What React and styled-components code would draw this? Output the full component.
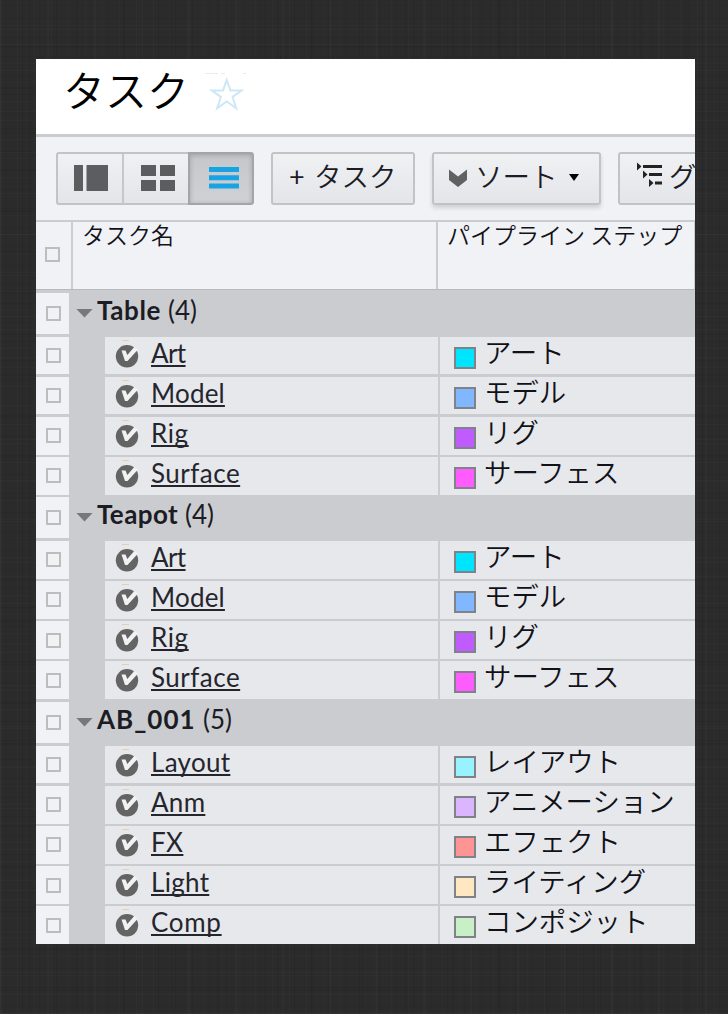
import React from "react";
import styled, { createGlobalStyle, css } from "styled-components";

const Global = createGlobalStyle`
  * { box-sizing: border-box; }
  body {
    margin: 0;
    background-color: #2b2b2b;
    background-image:
      repeating-linear-gradient(0deg, rgba(255,255,255,.016) 0 1px, transparent 1px 7px, rgba(0,0,0,.06) 7px 8px, transparent 8px 19px),
      repeating-linear-gradient(0deg, rgba(255,255,255,.02) 0 1px, transparent 1px 23px, rgba(0,0,0,.05) 23px 25px, transparent 25px 41px),
      repeating-linear-gradient(90deg, rgba(255,255,255,.016) 0 1px, transparent 1px 5px, rgba(0,0,0,.06) 5px 6px, transparent 6px 17px),
      repeating-linear-gradient(90deg, rgba(255,255,255,.02) 0 2px, transparent 2px 29px, rgba(0,0,0,.05) 29px 31px, transparent 31px 47px);
  }
`;

const jp = '"Noto Sans CJK JP", sans-serif';

const Page = styled.div`
  width: 728px;
  height: 1014px;
  padding: 59px 33px 70px 36px;
  overflow: hidden;
  color: #1c1c24;
  font-family: ${jp};
`;

const Panel = styled.main`
  width: 659px;
  height: 885px;
  overflow: hidden;
  background: #cbccd0;
`;

const TitleBar = styled.header`
  height: 75px;
  display: flex;
  align-items: flex-start;
  background: #fff;
  padding-left: 27px;
`;

const Title = styled.h1`
  margin: 0;
  width: 141px;
  font-size: 42px;
  font-weight: 350;
  line-height: 60px;
  color: #000;
  white-space: nowrap;
`;

const StarIcon = styled.svg`
  width: 44px;
  height: 42px;
  margin-top: 12px;
`;

const Toolbar = styled.div`
  height: 83px;
  margin-top: 3px;
  padding: 15px 0 0 20px;
  display: flex;
  align-items: flex-start;
  background: #f1f2f6;
`;

const frame = css`
  height: 53px;
  border: 2px solid #c2c3c6;
  border-radius: 3px;
  background: linear-gradient(#f0f1f3, #e4e5e9);
`;

const Segments = styled.div`
  ${frame}
  width: 198px;
  flex: none;
  display: flex;
  margin-right: 17px;
`;

const Segment = styled.button`
  width: ${(p) => p.$w}px;
  padding: 0 0 1px ${(p) => p.$shift || 0}px;
  border: 0;
  border-right: ${(p) => (p.$active ? 0 : "2px solid #c6c7ca")};
  background: none;
  display: flex;
  align-items: center;
  justify-content: center;
  ${(p) =>
    p.$active &&
    css`
      margin: -2px;
      width: 66px;
      border: 2px solid #a4a5a8;
      border-radius: 0 4px 4px 0;
      background: linear-gradient(#c6c7cb, #d0d1d5);
      box-shadow: inset 0 1px 5px rgba(0, 0, 0, 0.2);
    `}
`;

const Button = styled.button`
  ${frame}
  width: ${(p) => p.$w}px;
  flex: none;
  margin-right: ${(p) => p.$gap || 0}px;
  padding: 0 0 0 ${(p) => p.$pad}px;
  display: flex;
  align-items: center;
  justify-content: flex-start;
  text-align: left;
  font: 350 27.5px/46px ${jp};
  color: #1c1c24;
  white-space: nowrap;
  box-shadow: ${(p) => (p.$raised ? "0 3px 4px rgba(0,0,0,.14)" : "none")};

  > * {
    flex: none;
  }
`;

const ButtonText = styled.span`
  width: ${(p) => p.$w}px;
  margin-top: -8px;
`;

const Plus = styled.span`
  width: 25px;
  font-family: Lato, sans-serif;
  font-weight: 400;
  font-size: 27px;
  margin-top: -6px;
`;

const ChevronIcon = styled.svg`
  width: 18px;
  height: 18px;
  margin: -1px 8px 0 0;
`;

const CaretIcon = styled.svg`
  width: 10px;
  height: 7px;
  margin-top: -3px;
`;

const OutlineIcon = styled.svg`
  width: 26px;
  height: 26px;
  margin: -7px 7px 0 0;
`;

const HeaderRow = styled.div`
  display: grid;
  grid-template-columns: 35px 363px 256px;
  column-gap: 2px;
  height: 67px;
  margin-top: 2px;
`;

const HeaderCell = styled.div`
  background: #f1f2f6;
  padding-left: ${(p) => p.$pad || 0}px;
  font-size: 23px;
  font-weight: 350;
  line-height: 25px;
  color: #111118;
  white-space: nowrap;
`;

const HeaderBox = styled(HeaderCell)`
  display: flex;
  align-items: center;
  justify-content: center;
  padding: 0 2px 2px 0;
`;

const HeaderText = styled.span`
  display: block;
`;

const Rule = styled.div`
  height: 3.5px;
  border-top: 1px solid #b8b9bd;
`;

const GroupRow = styled.div`
  display: flex;
  height: ${(p) => p.$h}px;
  padding-bottom: 2.4px;
`;

const CheckCell = styled.div`
  width: 33px;
  flex: none;
  display: flex;
  align-items: center;
  justify-content: center;
  background: #f1f2f6;
  padding: 0 0 0 1px;
`;

const Checkbox = styled.span`
  width: 15px;
  height: 15px;
  border: 2px solid #bcbdbe;
  background: #f1f2f3;
`;

const GroupLabel = styled.div`
  display: flex;
  align-items: flex-start;
  padding-left: 7px;
  font: 400 26px/35px Lato, sans-serif;
  white-space: pre;
`;

const GroupCaret = styled.svg`
  width: 17px;
  height: 9px;
  margin: 16px 4px 0 0;
`;

const GroupName = styled.span`
  width: ${(p) => p.$w}px;
  font-weight: 700;
  font-size: 26px;
  letter-spacing: ${(p) => p.$ls}px;
`;

const Row = styled.div`
  display: grid;
  grid-template-columns: 33px 367px 255px;
  column-gap: 2px;
  height: 40.2px;
  padding-bottom: 2.4px;
`;

const Cell = styled.div`
  display: flex;
  align-items: flex-start;
  background: #e7e8ec;
`;

const NameCell = styled(Cell)`
  margin-left: 34px;
`;

const StatusIcon = styled.svg`
  width: 24px;
  height: 32px;
  margin: 1px 12px 0 10px;
`;

const TaskLink = styled.a`
  color: #25252d;
  font: 400 26px/33px Lato, sans-serif;
  letter-spacing: ${(p) => p.$ls}px;
  text-decoration: underline;
  text-decoration-thickness: 1.5px;
  text-underline-offset: 2px;
  text-decoration-skip-ink: none;
`;

const Swatch = styled.span`
  width: 22px;
  height: 22px;
  flex: none;
  margin: 10px 8px 0 14px;
  border: 2px solid #7f8388;
  background: ${(p) => p.$c};
`;

const Step = styled.span`
  font-size: 27.4px;
  font-weight: 350;
  line-height: 29px;
  white-space: nowrap;
  color: #111118;
`;

const asset = [
  ["Art", "アート", "#00e5ff", -0.6],
  ["Model", "モデル", "#80b7ff", 0.2],
  ["Rig", "リグ", "#c05cff", 0.6],
  ["Surface", "サーフェス", "#ff5cff", 0.5],
];

const groups = [
  { name: "Table", count: 4, h: 44, w: 71, ls: 0.6, tasks: asset },
  { name: "Teapot", count: 4, h: 43.6, w: 88, ls: 0.4, tasks: asset },
  {
    name: "AB_001",
    count: 5,
    h: 44,
    w: 106,
    ls: 1,
    tasks: [
      ["Layout", "レイアウト", "#99f3ff", 0.3],
      ["Anm", "アニメーション", "#dcb5ff", 0.3],
      ["FX", "エフェクト", "#ff9494", 0.4],
      ["Light", "ライティング", "#ffe7c2", 0.3],
      ["Comp", "コンポジット", "#c8efc5", 0.7],
    ],
  },
];

function Status() {
  return (
    <StatusIcon viewBox="0 0 24 32">
      <path d="M7 2.500h7" stroke="#e6cfae" strokeWidth="1" />
      <circle cx="12" cy="18.300" r="11.200" fill="#646465" />
      <path d="M6.500 12.500h4l1.800 4.500 7-8 3.700 2.500-10.500 11.500h-2.500z" fill="#f2f2f4" />
    </StatusIcon>
  );
}

export default function App() {
  return (
    <Page>
      <Global />
      <Panel>
        <TitleBar>
          <Title>タスク</Title>
          <StarIcon viewBox="0 0 44 42" fill="none">
            <path d="M1 2.500h13M17 2.500h4M39 2.500h3" stroke="#ececec" />
            <path d="M22.700 9l3.700 10.400h11.200l-9 6.600 3.600 11.300-9.500-6.800-9.500 6.800L16.800 26l-9-6.600H19z" stroke="#cde7f7" strokeWidth="2" />
          </StarIcon>
        </TitleBar>
        <Toolbar>
          <Segments>
            <Segment $w={66} $shift={2}>
              <svg width="34" height="26" fill="#5b5d5f">
                <path d="M0 0h9v26H0zM12.500 0h21.500v26H12.500z" />
              </svg>
            </Segment>
            <Segment $w={66} $shift={3}>
              <svg width="34" height="26" fill="#5b5d5f">
                <path d="M0 0h15v11H0zM19 0h15v11H19zM0 15h15v11H0zM19 15h15v11H19z" />
              </svg>
            </Segment>
            <Segment $active $shift={5}>
              <svg width="30" height="22" fill="#18a4e4">
                <path d="M0 0h30v5H0zM0 8.300h30v5H0zM0 16.600h30v5H0z" />
              </svg>
            </Segment>
          </Segments>
          <Button $w={144} $gap={17} $pad={16}>
            <Plus>+</Plus>
            <ButtonText>タスク</ButtonText>
          </Button>
          <Button $w={169} $gap={17} $pad={15} $raised>
            <ChevronIcon viewBox="0 0 18 18">
              <path d="M0 .5l9 7 9-7v10.500l-9 7-9-7z" fill="#606163" />
            </ChevronIcon>
            <ButtonText $w={94}>ソート</ButtonText>
            <CaretIcon viewBox="0 0 10 7">
              <path d="M0 0h10L5 7z" fill="#000" />
            </CaretIcon>
          </Button>
          <Button $w={140} $pad={16}>
            <OutlineIcon viewBox="0 0 26 26">
              <path d="M7 4.500h19M13 12.500h13M19 21h7" stroke="#222" strokeWidth="3" />
              <path d="M1 .5l4.500 4L1 8.500zM7 8.500l4.500 4-4.500 4zM13 17l4.500 4-4.500 4z" fill="#222" />
            </OutlineIcon>
            <ButtonText>グ</ButtonText>
          </Button>
        </Toolbar>
        <HeaderRow>
          <HeaderBox>
            <Checkbox />
          </HeaderBox>
          <HeaderCell $pad={9}>
            <HeaderText>タスク名</HeaderText>
          </HeaderCell>
          <HeaderCell $pad={9}>
            <HeaderText>パイプライン ステップ</HeaderText>
          </HeaderCell>
        </HeaderRow>
        <Rule />
        {groups.map((g) => (
          <section key={g.name}>
            <GroupRow $h={g.h}>
              <CheckCell>
                <Checkbox />
              </CheckCell>
              <GroupLabel>
                <GroupCaret viewBox="0 0 18 10">
                  <path d="M0 0h18L9 9.500z" fill="#77787a" />
                </GroupCaret>
                <GroupName $w={g.w} $ls={g.ls}>{g.name}</GroupName>
                <span>({g.count})</span>
              </GroupLabel>
            </GroupRow>
            {g.tasks.map(([name, step, color, ls]) => (
              <Row key={name}>
                <CheckCell>
                  <Checkbox />
                </CheckCell>
                <NameCell>
                  <Status />
                  <TaskLink $ls={ls}>{name}</TaskLink>
                </NameCell>
                <Cell>
                  <Swatch $c={color} />
                  <Step>{step}</Step>
                </Cell>
              </Row>
            ))}
          </section>
        ))}
      </Panel>
    </Page>
  );
}
